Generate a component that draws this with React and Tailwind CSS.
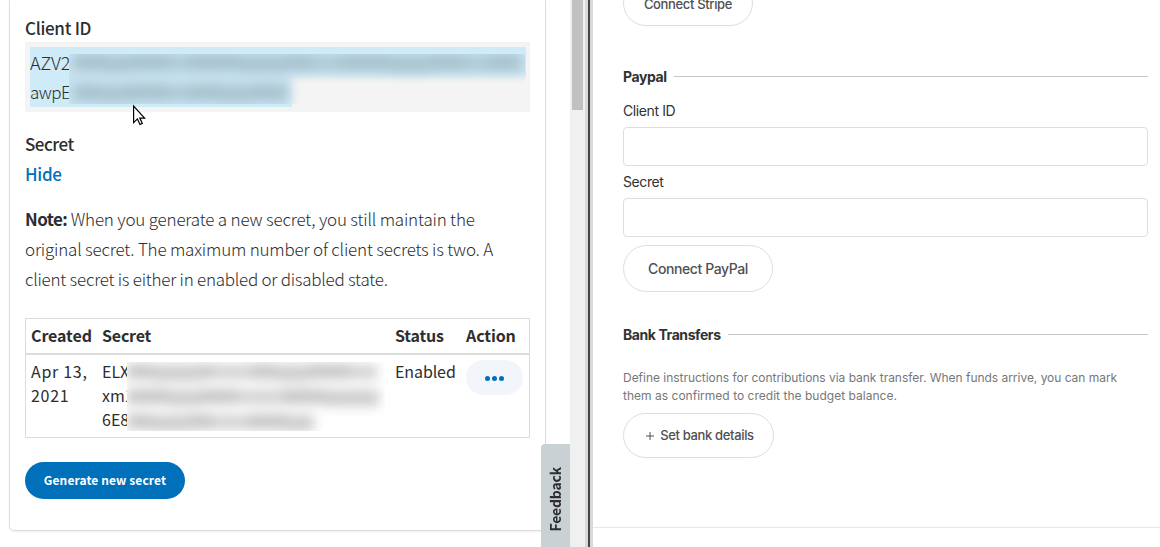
import React from "react";

const sans = "font-['Noto_Sans_CJK_SC','Noto_Sans',sans-serif]";

function Redaction({ rows, className, backdrop, tone }) {
  return (
    <div aria-hidden="true" className={`absolute overflow-hidden ${className}`}>
      {backdrop}
      <div className="absolute inset-0 blur-[6px]">
        {rows.map((row, i) => (
          <div key={i} className={row.className}>
            {row.parts.map((w, j) => (
              <span
                key={j}
                className={`block shrink-0 ${tone} ${
                  j % 4 === 1 ? "mt-[1px] h-[16px] opacity-90" : j % 4 === 3 ? "mt-[1px] h-[14px] opacity-80" : "h-[15px]"
                }`}
                style={{ width: w }}
              />
            ))}
          </div>
        ))}
      </div>
    </div>
  );
}

function SectionTitle({ children, className }) {
  return (
    <div className={`flex h-5 items-center ${className}`}>
      <h2 className="whitespace-nowrap pr-[7px] text-[14px] font-bold leading-5 tracking-[-0.42px] text-[#313233]">{children}</h2>
      <div className="mb-px h-px flex-1 bg-[#c4c7cc]" />
    </div>
  );
}

function Field({ label }) {
  return (
    <label className="block">
      <span className="block h-[26px] text-[14px] leading-5 tracking-[-0.4px] text-[#313233]">{label}</span>
      <input className="block h-[39px] w-full rounded-[4px] border border-[#dcdee0] bg-white px-3 outline-none" />
    </label>
  );
}

function PaypalPanel() {
  return (
    <div className={`h-[547px] w-[570px] overflow-hidden pl-[9px] text-[#2c2e2f] ${sans}`}>
      <div className="h-[531px] w-[537px] rounded-b-[5px] border border-t-0 border-[#dcdcdc] px-[15px] pt-[13px] shadow-[0_1px_2px_rgba(0,0,0,0.06)]">
        <div className="h-[29px] text-[17px] font-medium leading-[30px] tracking-[-0.3px]">Client ID</div>
        <div className="relative h-[70px] bg-[#f4f4f4] p-[5px] text-[18px] font-light leading-[30px]">
          <div className="h-[30px] w-[496px] bg-[#cfebf8]">AZV2</div>
          <div className="h-[30px] w-[262px] bg-[#cfebf8] text-[17px] tracking-[-0.5px]">awpE</div>
          <Redaction
            className="left-[44px] top-[12px] h-[50px] w-[456px]"
            tone="bg-[#a6bfcb]"
            backdrop={
              <div className="absolute inset-0 bg-[#f4f4f4]">
                <div className="absolute -left-5 -top-5 h-[43px] w-[500px] bg-[#c8e4f1] blur-[3px]" />
                <div className="absolute -left-5 top-0 h-[70px] w-[243px] bg-[#c8e4f1] blur-[4px]" />
              </div>
            }
            rows={[
              { className: "flex h-[30px] pt-[1px] pl-1", parts: [34, 22, 40, 20, 52, 46, 24, 30, 50, 38, 35, 25, 32] },
              { className: "flex h-[20px] pt-[1px] pl-1", parts: [25, 28, 42, 20, 35, 30, 34] },
            ]}
          />
        </div>
        <div className="mt-[17px] text-[17px] font-medium leading-[30px] tracking-[-0.5px]">Secret</div>
        <div className="text-[17px] font-medium leading-[30px] tracking-[-0.3px] text-[#0070ba]">Hide</div>
        <p className="mt-[15px] whitespace-nowrap text-[17px] font-light leading-[30px]">
          <span className="block tracking-[-0.19px]"><b className="font-bold tracking-[-0.6px]">Note:</b> When you generate a new secret, you still maintain the</span>
          <span className="block tracking-[-0.2px]">original secret. The maximum number of client secrets is two. A</span>
          <span className="block tracking-[-0.25px]">client secret is either in enabled or disabled state.</span>
        </p>
        <div className="mt-[24px] h-[120px] border border-[#dcdcdc] text-[16px] leading-6">
          <div className="grid h-[36px] grid-cols-[71px_293px_71px_68px] border-b-2 border-[#dcdcdc] pl-[5px] pt-[4px] font-bold tracking-[-0.1px]">
            <span>Created</span><span className="tracking-[-0.2px]">Secret</span><span className="tracking-[-0.2px]">Status</span><span>Action</span>
          </div>
          <div className="relative grid grid-cols-[71px_293px_71px_57px] pl-[5px] pt-[4px]">
            <span className="tracking-[0.7px]">Apr 13,<br />2021</span>
            <span>ELX<br />xm1<br />6E8</span>
            <span className="tracking-[-0.1px]">Enabled</span>
            <button className="mt-px flex h-[35px] w-[57px] items-center justify-center gap-[2px] rounded-full bg-[#f2f6fa] pt-[2px]">
              <i className="size-[5px] rounded-full bg-[#0070ba]" /><i className="size-[5px] rounded-full bg-[#0070ba]" /><i className="size-[5px] rounded-full bg-[#0070ba]" />
            </button>
            <Redaction
              className="left-[101px] top-[7px] h-[69px] w-[258px]"
              tone="bg-[#c6c6c6]"
              backdrop={<div className="absolute inset-0 bg-white" />}
              rows={[
                { className: "flex h-[24px] pt-[2px]", parts: [25, 50, 10, 40, 22, 35, 40, 28] },
                { className: "flex h-[24px] pt-[3px]", parts: [42, 32, 36, 46, 42, 54] },
                { className: "flex h-[21px] pt-[4px]", parts: [25, 36, 24, 36, 38, 28] },
              ]}
            />
          </div>
        </div>
        <button className="mt-6 block h-[37px] w-[160px] whitespace-nowrap rounded-full bg-[#0070ba] pb-px text-[12px] font-bold tracking-[0.1px] text-white">Generate new secret</button>
      </div>
      <div className="absolute left-[541px] top-[444px] flex h-[103px] w-[29px] items-center justify-center rounded-tl-[4px] bg-[#c9d1d4]">
        <span className="mr-px mt-[7px] rotate-180 text-[14px] font-bold leading-none tracking-[-0.2px] text-[#2c2e2f] [writing-mode:vertical-rl]">Feedback</span>
      </div>
      <svg className="absolute left-[132px] top-[104px]" width="15" height="22" viewBox="0 0 15 22">
        <path d="M1.6 2v16.6l3.8-3.7 2.6 5.6 2.3-1.1-2.5-5.3h4.8z" fill="white" stroke="black" strokeWidth="1.2" />
      </svg>
    </div>
  );
}

function Divider() {
  return (
    <div className="flex h-[547px] w-[23px]">
      <div className="w-[15px] bg-[#f0f0f0] pl-[2px]"><div className="h-[110px] w-[11px] bg-[#c1c1c1]" /></div>
      <div className="w-[8px] border-x-[3px] border-[#d9d9d9] bg-[#444444]" />
    </div>
  );
}

function SettingsPanel() {
  return (
    <div className="h-[547px] flex-1 overflow-hidden font-['Inter',sans-serif]">
      <div className="flow-root h-[528px] border-b border-[#e6e8eb] pl-[30px] pr-[12px]">
        <div className="flex h-[26px] items-end">
          <button className="h-[46px] w-[130px] shrink-0 rounded-full border border-[#dcdee0] pt-[3px] text-[13px] font-medium tracking-[-0.35px] text-[#4e5052]">Connect Stripe</button>
        </div>
        <SectionTitle className="mt-[41px]">Paypal</SectionTitle>
        <div className="mt-[14px]"><Field label="Client ID" /></div>
        <div className="mt-[6px]"><Field label="Secret" /></div>
        <button className="mt-[8px] block h-[47px] w-[150px] rounded-full border border-[#dcdee0] text-[14px] font-medium tracking-[-0.4px] text-[#4e5052]">Connect PayPal</button>
        <SectionTitle className="mt-[33px]">Bank Transfers</SectionTitle>
        <p className="mt-6 whitespace-nowrap text-[12px] leading-[18px] text-[#76777a]">
          <span className="block tracking-[-0.03px]">Define instructions for contributions via bank transfer. When funds arrive, you can mark</span>
          <span className="block tracking-[0.02px]">them as confirmed to credit the budget balance.</span>
        </p>
        <button className="mt-[8px] flex h-[45px] w-[151px] items-center justify-center gap-[6px] whitespace-nowrap rounded-full border border-[#dcdee0] pl-[3px] text-[13px] font-medium tracking-[-0.35px] text-[#4e5052]">
          <svg className="mt-px" width="8" height="8" viewBox="0 0 8 8"><path d="M4 0v8M0 4h8" stroke="currentColor" fill="none" /></svg>
          <span>Set bank details</span>
        </button>
      </div>
    </div>
  );
}

export default function App() {
  return (
    <div className="relative flex h-[547px] w-[1160px] overflow-hidden bg-white">
      <PaypalPanel />
      <Divider />
      <SettingsPanel />
    </div>
  );
}
